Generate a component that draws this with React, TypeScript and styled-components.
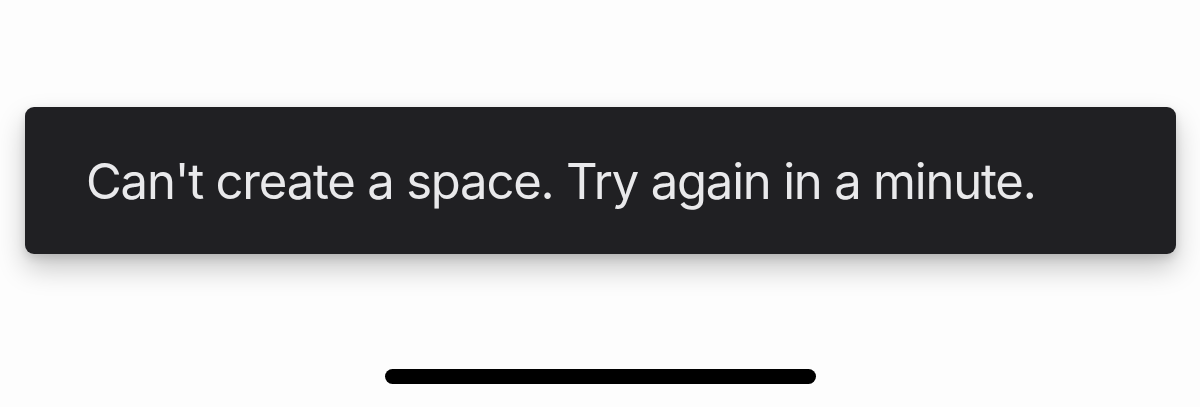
import React from "react";
import styled, { createGlobalStyle } from "styled-components";

const Global = createGlobalStyle`
  html, body {
    margin: 0;
    padding: 0;
    background: #fdfdfd;
  }
  body {
    font-family: Inter, "Noto Sans", "Liberation Sans", sans-serif;
  }
`;

const Screen = styled.div`
  width: 1200px;
  height: 407px;
  box-sizing: border-box;
  padding: 107px 24px 0 25px;
  display: flex;
  flex-direction: column;
  align-items: center;
  overflow: hidden;
`;

const Toast = styled.div`
  align-self: stretch;
  height: 147px;
  box-sizing: border-box;
  padding-left: 61px;
  display: flex;
  align-items: center;
  background: #202023;
  border-radius: 9px;
  box-shadow: 0 14px 28px rgba(0, 0, 0, 0.22), 0 4px 8px rgba(0, 0, 0, 0.12);
`;

const Message = styled.span`
  color: #e9e9eb;
  font-size: 49px;
  font-weight: 400;
  letter-spacing: -1.2px;
  line-height: 1;
  margin-top: 1px;
`;

const HomeIndicator = styled.div`
  margin-top: 115px;
  width: 431px;
  height: 15px;
  border-radius: 8px;
  background: #000;
`;

export default function App() {
  return (
    <>
      <Global />
      <Screen>
        <Toast>
          <Message>Can't create a space. Try again in a minute.</Message>
        </Toast>
        <HomeIndicator />
      </Screen>
    </>
  );
}
